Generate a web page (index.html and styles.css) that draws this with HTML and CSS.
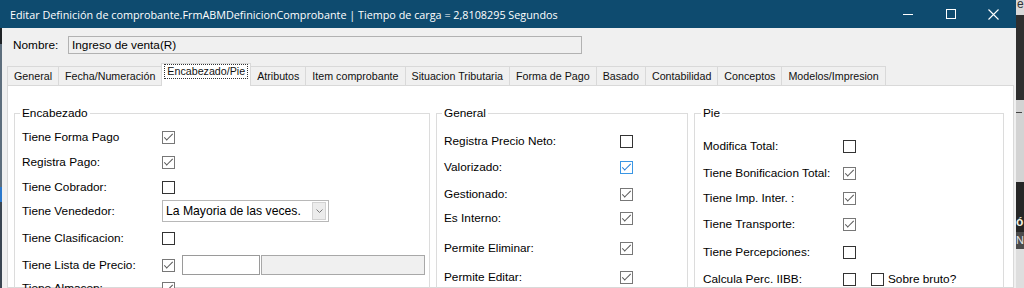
FILE: index.html
```html
<!DOCTYPE html>
<html lang="es">
<head>
<meta charset="utf-8">
<title>Editar Definición de comprobante</title>
<link rel="stylesheet" href="styles.css">
</head>
<body>
<div class="desk-left">
  <div class="dl-top"></div>
  <div class="dl-a"></div>
  <div class="dl-b"></div>
  <div class="dl-c"></div>
  <div class="dl-d"></div>
</div>
<div class="window">
  <div class="titlebar">
    <span class="title">Editar Definición de comprobante.FrmABMDefinicionComprobante | Tiempo de carga = 2,8108295 Segundos</span>
    <div class="caption-buttons">
      <span class="cap-btn"><svg width="10" height="10" viewBox="0 0 10 10"><line x1="0" y1="5.5" x2="10" y2="5.5" stroke="#fff" stroke-width="1"/></svg></span>
      <span class="cap-btn"><svg width="10" height="10" viewBox="0 0 10 10"><rect x="0.5" y="0.5" width="9" height="9" fill="none" stroke="#fff" stroke-width="1"/></svg></span>
      <span class="cap-btn"><svg width="11" height="11" viewBox="0 0 11 11"><path d="M0.5 0.5L10.5 10.5M10.5 0.5L0.5 10.5" stroke="#fff" stroke-width="1.1" fill="none"/></svg></span>
    </div>
  </div>
  <div class="client">
    <div class="name-row">
      <span class="name-label">Nombre:</span>
      <div class="name-box">Ingreso de venta(R)</div>
    </div>
    <div class="tabstrip">
      <div class="tab">General</div>
      <div class="tab">Fecha/Numeración</div>
      <div class="tab active"><span class="focus">Encabezado/Pie</span></div>
      <div class="tab">Atributos</div>
      <div class="tab">Item comprobante</div>
      <div class="tab">Situacion Tributaria</div>
      <div class="tab">Forma de Pago</div>
      <div class="tab">Basado</div>
      <div class="tab">Contabilidad</div>
      <div class="tab">Conceptos</div>
      <div class="tab">Modelos/Impresion</div>
    </div>
    <div class="tabpage">
      <fieldset class="group grp-enc">
        <legend>Encabezado</legend>
        <div class="rows rows-enc">
          <div class="row"><span class="lbl">Tiene Forma Pago</span><span class="cb on"></span></div>
          <div class="row"><span class="lbl">Registra Pago:</span><span class="cb on"></span></div>
          <div class="row"><span class="lbl">Tiene Cobrador:</span><span class="cb"></span></div>
          <div class="row"><span class="lbl">Tiene Venededor:</span>
            <div class="combo"><span class="combo-text">La Mayoria de las veces.</span><span class="combo-btn"><svg width="7" height="4" viewBox="0 0 7 4"><path d="M0.5 0.5L3.5 3.5L6.5 0.5" fill="none" stroke="#7a7a7a" stroke-width="1"/></svg></span></div>
          </div>
          <div class="row"><span class="lbl">Tiene Clasificacion:</span><span class="cb"></span></div>
          <div class="row"><span class="lbl">Tiene Lista de Precio:</span><span class="cb on"></span><span class="tb tb-code"></span><span class="tb tb-desc"></span></div>
          <div class="row"><span class="lbl">Tiene Almacen:</span><span class="cb on"></span></div>
        </div>
      </fieldset>
      <fieldset class="group grp-gen">
        <legend>General</legend>
        <div class="rows rows-gen">
          <div class="row"><span class="lbl">Registra Precio Neto:</span><span class="cb"></span></div>
          <div class="row"><span class="lbl">Valorizado:</span><span class="cb on hot"></span></div>
          <div class="row"><span class="lbl">Gestionado:</span><span class="cb on"></span></div>
          <div class="row"><span class="lbl">Es Interno:</span><span class="cb on"></span></div>
          <div class="row"><span class="lbl">Permite Eliminar:</span><span class="cb on"></span></div>
          <div class="row"><span class="lbl">Permite Editar:</span><span class="cb on"></span></div>
        </div>
      </fieldset>
      <fieldset class="group grp-pie">
        <legend>Pie</legend>
        <div class="rows rows-pie">
          <div class="row"><span class="lbl">Modifica Total:</span><span class="cb"></span></div>
          <div class="row"><span class="lbl">Tiene Bonificacion Total:</span><span class="cb on"></span></div>
          <div class="row"><span class="lbl">Tiene Imp. Inter. :</span><span class="cb on"></span></div>
          <div class="row"><span class="lbl">Tiene Transporte:</span><span class="cb on"></span></div>
          <div class="row"><span class="lbl">Tiene Percepciones:</span><span class="cb"></span></div>
          <div class="row"><span class="lbl">Calcula Perc. IIBB:</span><span class="cb"></span><span class="cb cb-extra"></span><span class="extra-lbl">Sobre bruto?</span></div>
        </div>
      </fieldset>
    </div>
  </div>
</div>
<div class="desk-right">
  <div class="dr-a"><span>e</span></div>
  <div class="dr-b"></div>
  <div class="dr-c"><span class="dr-dash"></span></div>
  <div class="dr-d"><span>ó</span></div>
  <div class="dr-e"><span>N</span></div>
  <div class="dr-f"></div>
</div>
</body>
</html>
```

FILE: styles.css
```css
html, body {
  margin: 0;
  padding: 0;
}

body {
  width: 1024px;
  height: 288px;
  overflow: hidden;
  display: flex;
  background: #2d2d2d;
  font-family: "Liberation Sans", Arial, sans-serif;
  color: #000;
}

/* background desktop strips */
.desk-left {
  width: 2px;
  flex: none;
  display: flex;
  flex-direction: column;
}
.dl-top { height: 28px; background: #0e4b6f; }
.dl-a { height: 16px; background: #1f2326; }
.dl-b { height: 143px; background: #5d6e7d; }
.dl-c { height: 15px; background: #2a78cc; }
.dl-d { flex: 1; background: #3b4652; }

.desk-right {
  width: 8px;
  flex: none;
  display: flex;
  flex-direction: column;
  overflow: hidden;
  font-family: "Liberation Sans", Arial, sans-serif;
}
.dr-a {
  height: 15px;
  background: #d9d9d9;
  font-size: 12px;
  line-height: 8px;
  color: #333;
  overflow: hidden;
  padding-left: 1px;
}
.dr-b { height: 85px; background: #2f2f2f; }
.dr-c {
  height: 82px;
  background: #d3d3d3;
  display: flex;
  flex-direction: column;
  padding-top: 12px;
  box-sizing: border-box;
}
.dr-dash { width: 6px; height: 1px; background: #444; }
.dr-d {
  height: 50px;
  background: #262626;
  color: #f2f2e0;
  font-weight: bold;
  font-size: 12px;
  display: flex;
  align-items: flex-end;
  padding-bottom: 3px;
  box-sizing: border-box;
}
.dr-e {
  height: 17px;
  background: #4b4b4b;
  color: #e6e6e6;
  font-size: 11px;
  line-height: 17px;
}
.dr-f { flex: 1; background: #dedede; }

/* window */
.window {
  width: 1014px;
  flex: none;
  display: flex;
  flex-direction: column;
  background: #f0f0f0;
}

.titlebar {
  height: 28px;
  flex: none;
  background: #0e4b6f;
  color: #fff;
  display: flex;
  align-items: center;
}
.title {
  flex: 1;
  padding-left: 8px;
  font-family: "Open Sans", "Noto Sans", sans-serif;
  font-size: 10.8px;
  white-space: nowrap;
}
.caption-buttons {
  display: flex;
  height: 100%;
  padding-right: 1px;
}
.cap-btn {
  width: 43px;
  display: flex;
  align-items: center;
  justify-content: center;
}

.client {
  flex: 1;
  display: flex;
  flex-direction: column;
  padding: 8px 2px 0 5px;
  min-height: 0;
}

.name-row {
  display: flex;
  align-items: center;
  height: 18px;
  padding-left: 6px;
  font-size: 11.8px;
}
.name-label {
  width: 55px;
  flex: none;
}
.name-box {
  width: 514px;
  height: 18px;
  box-sizing: border-box;
  border: 1px solid #b2b2b2;
  background: #f0f0f0;
  padding-left: 3px;
  display: flex;
  align-items: center;
}

/* tabs */
.tabstrip {
  display: flex;
  align-items: flex-end;
  height: 22px;
  margin-top: 9px;
  font-size: 10.7px;
}
.tab {
  height: 19px;
  box-sizing: border-box;
  border: 1px solid #d9d9d9;
  border-bottom: none;
  border-right: none;
  background: #f0f0f0;
  padding: 0 6px 1px;
  display: flex;
  align-items: center;
  white-space: nowrap;
  color: #111;
}
.tab:last-child {
  border-right: 1px solid #d9d9d9;
}
.tab.active {
  height: 23px;
  margin-bottom: -1px;
  margin-right: -1px;
  background: #fff;
  border-right: 1px solid #d9d9d9;
  padding: 0 5px;
  align-items: flex-start;
  position: relative;
  z-index: 1;
}
.focus {
  border: 1px dotted #333;
  padding: 0 2px;
  margin: 0 -3px;
  line-height: 13px;
}

.tabpage {
  flex: 1;
  min-height: 0;
  background: #fff;
  border: 1px solid #d9d9d9;
  display: flex;
  gap: 6px;
  padding: 20px 0 0 6px;
}

/* group boxes */
.group {
  margin: 0;
  flex: none;
  min-width: 0;
  height: 260px;
  box-sizing: border-box;
  border: 1px solid #dcdcdc;
  padding: 0 0 0 7px;
}
.group legend {
  padding: 0 2px;
  margin-left: -2px;
  font-size: 11.8px;
  line-height: 14px;
}
.grp-enc { width: 416px; padding-top: 7px; }
.grp-gen { width: 252px; padding-top: 11px; }
.grp-pie { width: 310px; padding-top: 16px; padding-left: 8px; }

.rows {
  display: grid;
  align-items: start;
}
.rows-enc { grid-template-rows: 25px 25px 24px 27px 27px 23px 20px; }
.rows-gen { grid-template-rows: 26px 27px 24px 30px 29px 20px; }
.rows-pie { grid-template-rows: 27px 25px 26px 28px 27px 20px; }

.row {
  display: flex;
  align-items: center;
  height: 20px;
  font-size: 11.8px;
  white-space: nowrap;
}
.lbl { flex: none; }
.rows-enc .lbl { width: 140px; }
.rows-gen .lbl { width: 176px; }
.rows-pie .lbl { width: 140px; }

/* checkbox */
.cb {
  width: 13px;
  height: 13px;
  flex: none;
  box-sizing: border-box;
  border: 1px solid #333;
  background: #fff;
  display: flex;
  align-items: center;
  justify-content: center;
}
.cb.on {
  border-color: #777;
}
.cb.on::after {
  content: "";
  width: 8px;
  height: 3px;
  border-left: 1px solid #555;
  border-bottom: 1px solid #555;
  transform: rotate(-45deg);
  margin-top: -2px;
}
.cb.hot {
  border-color: #3a96e4;
}
.cb.hot::after {
  border-color: #1f7bd6;
}
.cb-extra { margin-left: 15px; }
.extra-lbl { margin-left: 4px; }

/* combo */
.combo {
  width: 167px;
  height: 22px;
  flex: none;
  box-sizing: border-box;
  border: 1px solid #b8b8b8;
  background: #fff;
  display: flex;
  align-items: center;
  padding: 1px 2px 1px 0;
  font-size: 12.2px;
}
.combo-text {
  flex: 1;
  padding-left: 3px;
}
.combo-btn {
  width: 14px;
  height: 18px;
  box-sizing: border-box;
  background: #ececec;
  border: 1px solid #d2d2d2;
  display: flex;
  align-items: center;
  justify-content: center;
}

/* text boxes */
.tb {
  height: 20px;
  flex: none;
  box-sizing: border-box;
}
.tb-code {
  width: 78px;
  margin-left: 7px;
  border: 1px solid #9a9a9a;
  background: #fff;
}
.tb-desc {
  width: 164px;
  margin-left: 1px;
  border: 1px solid #a8a8a8;
  background: #f0f0f0;
}
```
